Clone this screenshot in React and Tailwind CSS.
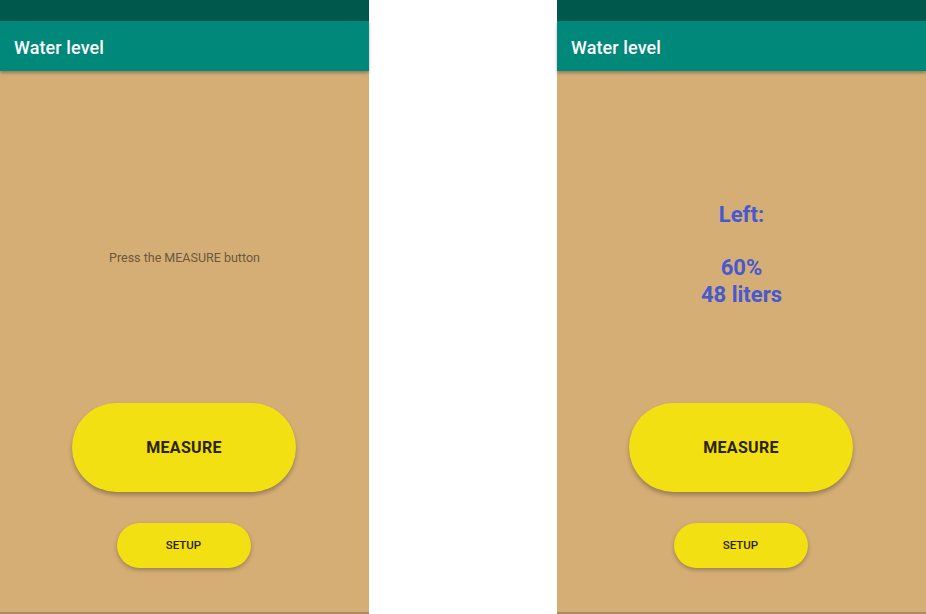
import React from "react";

const Phone = ({ children }) => {
  return (
    <div className="w-[369px] h-[614px] flex flex-col bg-[#d5ae76]">
      <div className="h-[21px] bg-[#00574b]" />
      <div className="h-[50px] bg-[#00887a] flex items-center pt-[2px] px-[14px] shadow-[0_2px_3px_rgba(0,0,0,0.3)] relative z-10">
        <span className="text-white text-[18px] font-medium tracking-[0.1px]">Water level</span>
      </div>
      <div className="flex-1 flex flex-col items-center">
        <div className="h-[332px] w-full flex flex-col items-center">{children}</div>
        <button className="-ml-[1px] w-[224px] h-[89px] rounded-full bg-[#f3e012] shadow-[0_3px_4px_rgba(0,0,0,0.28)] text-[#2b2300] text-[16px] font-bold tracking-[0.3px]">
          MEASURE
        </button>
        <button className="-ml-[2px] mt-[31px] w-[134px] h-[45px] rounded-full bg-[#f3e012] shadow-[0_2px_4px_rgba(0,0,0,0.28)] text-[#2b2300] text-[11.5px] font-medium">
          SETUP
        </button>
      </div>
      <div className="h-[2px] bg-[#a88b5f]" />
    </div>
  );
};

export default function App() {
  return (
    <div
      className="w-[926px] h-[614px] bg-white flex justify-between overflow-hidden"
      style={{ fontFamily: "Roboto, 'Noto Sans', sans-serif" }}
    >
      <Phone>
        <p className="pt-[179px] text-[12.5px] leading-[16px] text-[#6b583b]">Press the MEASURE button</p>
      </Phone>
      <Phone>
        <div className="pt-[131px] text-center text-[22px] leading-[26.5px] font-bold text-[#4759d0]">
          <div>Left:</div>
          <div>&nbsp;</div>
          <div>60%</div>
          <div>48 liters</div>
        </div>
      </Phone>
    </div>
  );
}
